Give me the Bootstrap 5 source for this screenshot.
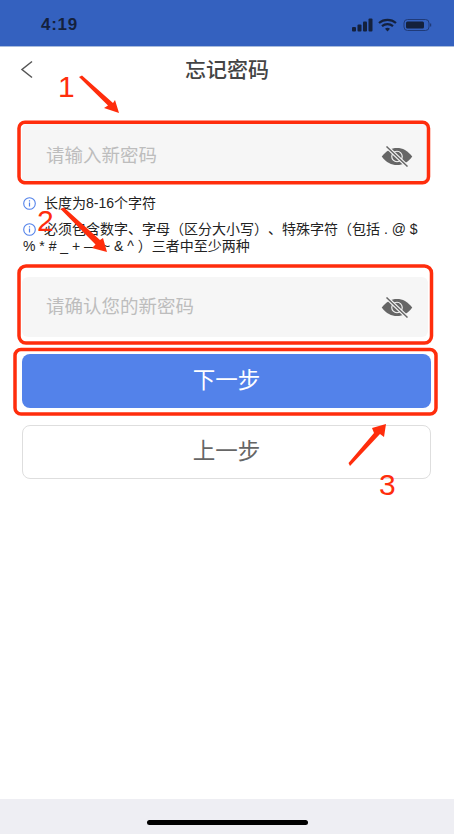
<!DOCTYPE html>
<html lang="zh-CN">
<head>
    <meta charset="UTF-8">
    <meta name="viewport" content="width=device-width, initial-scale=1.0">
    <title>忘记密码</title>
    <link href="https://cdn.jsdelivr.net/npm/bootstrap@5.3.0/dist/css/bootstrap.min.css" rel="stylesheet">
    <style>
        body {
            font-family: "Liberation Sans", "Noto Sans CJK SC", sans-serif;
            background: #fff;
        }

        .phone-page {
            position: relative;
            width: 454px;
            height: 834px;
            overflow: hidden;
        }

        /* 状态栏 */
        .status-strip {
            height: 47px;
            padding: 3px 20px 0 41px;
            background: #3461bf;
            border-bottom: 1px solid #a9bcdc;
            color: #14213d;
        }

        .status-time {
            font-size: 17px;
            font-weight: 700;
            letter-spacing: .7px;
        }

        .title-bar {
            height: 45px;
            padding-left: 20px;
        }

        .title-bar h1 {
            font-size: 21px;
            font-weight: 500;
            color: #444;
            left: 0;
            right: 0;
        }

        .form-area {
            padding: 32px 23px 0 22px;
        }

        /* 输入框 */
        .pwd-box {
            height: 60px;
            margin-right: 3px;
            padding: 0 15px 0 24px;
            background: #f6f6f6;
            border-radius: 6px;
        }

        .pwd-first {
            padding-top: 4px;
        }

        .pwd-box .form-control {
            padding: 0;
            font-size: 18.5px;
            background: transparent;
            border: 0;
            box-shadow: none;
        }

        .pwd-box .form-control::placeholder {
            color: #bdbdbd;
        }

        .hint-list {
            margin: 11px 0 22px;
            padding-left: 1px;
            font-size: 14px;
            line-height: 17px;
            color: #222;
            text-spacing-trim: space-all;
        }

        .hint-list p {
            margin-bottom: 9px;
        }

        .hint-list p:last-child {
            margin-bottom: 0;
        }

        .hint-list svg {
            margin: -2px 8px 0 0;
            vertical-align: middle;
        }

        .step-btn {
            height: 54px;
            font-size: 22.5px;
            border-radius: 8px;
        }

        .step-next {
            margin-top: 17px;
            background: #5382ea;
            border: 0;
            color: #fff;
        }

        .step-prev {
            margin-top: 17px;
            background: #fff;
            border: 1px solid #dedede;
            color: #666;
        }

        .home-area {
            height: 35px;
            background: #eeeef3;
            padding-top: 21px;
        }

        .home-handle {
            width: 161px;
            height: 5px;
            margin: 0 auto;
            background: #000;
            border-radius: 3px;
        }

        /* 截图上的红色标注 */
        .mark-layer {
            position: absolute;
            top: 0;
            left: 0;
            pointer-events: none;
        }

        .mark-layer text {
            font-family: "Liberation Sans", sans-serif;
            font-size: 30px;
            fill: #ff2d0c;
        }
    </style>
</head>
<body>

<div class="phone-page d-flex flex-column">
    <div class="status-strip d-flex align-items-center justify-content-between">
        <span class="status-time">4:19</span>
        <svg width="82" height="14" viewBox="0 0 82 14">
            <rect x="0" y="9" width="4" height="4.500" rx="1" fill="#14213d"/>
            <rect x="5.500" y="6.500" width="4" height="7" rx="1" fill="#14213d"/>
            <rect x="11" y="3.500" width="4" height="10" rx="1" fill="#14213d"/>
            <rect x="16.500" y="0.500" width="4" height="13" rx="1" fill="#14213d"/>
            <path d="M27 5a13 13 0 0 1 17 0M30 8.200a8.500 8.500 0 0 1 11 0" fill="none" stroke="#14213d" stroke-width="2.200"/>
            <path d="M33 10.800a4 4 0 0 1 5 0L35.500 13.500z" fill="#14213d"/>
            <rect x="52" y="1.500" width="25" height="11" rx="3.500" fill="none" stroke="#1f3a78"/>
            <rect x="54" y="3.500" width="18" height="7" rx="1.500" fill="#14213d"/>
            <rect x="78" y="5.500" width="1.200" height="3" fill="#1f3a78"/>
        </svg>
    </div>

    <div class="title-bar position-relative d-flex align-items-center">
        <svg width="13" height="19" viewBox="0 0 13 19" class="position-relative">
            <path d="M12 1.500 2 9.500l10 8" fill="none" stroke="#555" stroke-width="1.500"/>
        </svg>
        <h1 class="position-absolute text-center m-0">忘记密码</h1>
    </div>

    <form class="form-area flex-grow-1">
        <div class="pwd-box pwd-first d-flex align-items-center">
            <input type="password" class="form-control" placeholder="请输入新密码">
            <svg width="32" height="21" viewBox="0 0 32 22" class="flex-shrink-0">
                <path d="M0 11C5 4.500 10 2 16 2s11 2.500 16 9c-5 6.500-10 9-16 9S5 17.500 0 11z" fill="#666"/>
                <circle cx="16" cy="11" r="5.500" fill="none" stroke="#f6f6f6" stroke-width="1.200"/>
                <path d="M5 .5 27 21.500" stroke="#f6f6f6" stroke-width="4"/>
                <path d="M5 .5 27 21.500" stroke="#666" stroke-width="1.500"/>
            </svg>
        </div>

        <div class="hint-list">
            <p><svg width="13" height="13" viewBox="0 0 13 13"><circle cx="6.500" cy="6.500" r="5.800" fill="none" stroke="#5382ea" stroke-width="1.100"/><path d="M6.500 5.500v4M6.500 3.200v1.200" stroke="#5382ea" stroke-width="1.200"/></svg>长度为8-16个字符</p>
            <p><svg width="13" height="13" viewBox="0 0 13 13"><circle cx="6.500" cy="6.500" r="5.800" fill="none" stroke="#5382ea" stroke-width="1.100"/><path d="M6.500 5.500v4M6.500 3.200v1.200" stroke="#5382ea" stroke-width="1.200"/></svg>必须包含数字、字母（区分大小写）、特殊字符（包括 . @ $<br>% * # _ + — ~ &amp; ^ ）三者中至少两种</p>
        </div>

        <div class="pwd-box d-flex align-items-center">
            <input type="password" class="form-control" placeholder="请确认您的新密码">
            <svg width="32" height="21" viewBox="0 0 32 22" class="flex-shrink-0">
                <path d="M0 11C5 4.500 10 2 16 2s11 2.500 16 9c-5 6.500-10 9-16 9S5 17.500 0 11z" fill="#666"/>
                <circle cx="16" cy="11" r="5.500" fill="none" stroke="#f6f6f6" stroke-width="1.200"/>
                <path d="M5 .5 27 21.500" stroke="#f6f6f6" stroke-width="4"/>
                <path d="M5 .5 27 21.500" stroke="#666" stroke-width="1.500"/>
            </svg>
        </div>

        <button type="button" class="btn step-btn step-next w-100 d-block">下一步</button>
        <button type="button" class="btn step-btn step-prev w-100 d-block">上一步</button>
    </form>

    <div class="home-area">
        <div class="home-handle"></div>
    </div>

    <svg class="mark-layer" width="454" height="834" viewBox="0 0 454 834">
        <g fill="none" stroke="#ff2d0c" stroke-width="3.500">
            <rect x="19" y="122.300" width="409.500" height="60.500" rx="6"/>
            <rect x="19" y="266" width="412.500" height="77" rx="7"/>
            <rect x="15" y="349.500" width="421" height="64.500" rx="6"/>
        </g>
        <g fill="#ff2d0c">
            <path d="M79 77 82 75.500 113 103 115 100 119 113 104 108 108 105.500z"/>
            <path d="M60.500 209 64 207.500 100 240 103 238 107 252 92 248 95.500 244.500z"/>
            <path d="M350 466 348.500 463 374 433 372 428 386 424 384 437 380 434z"/>
        </g>
        <text x="58" y="97">1</text>
        <text x="37" y="231">2</text>
        <text x="379" y="495">3</text>
    </svg>
</div>

<script src="https://cdn.jsdelivr.net/npm/bootstrap@5.3.0/dist/js/bootstrap.bundle.min.js"></script>
</body>
</html>
